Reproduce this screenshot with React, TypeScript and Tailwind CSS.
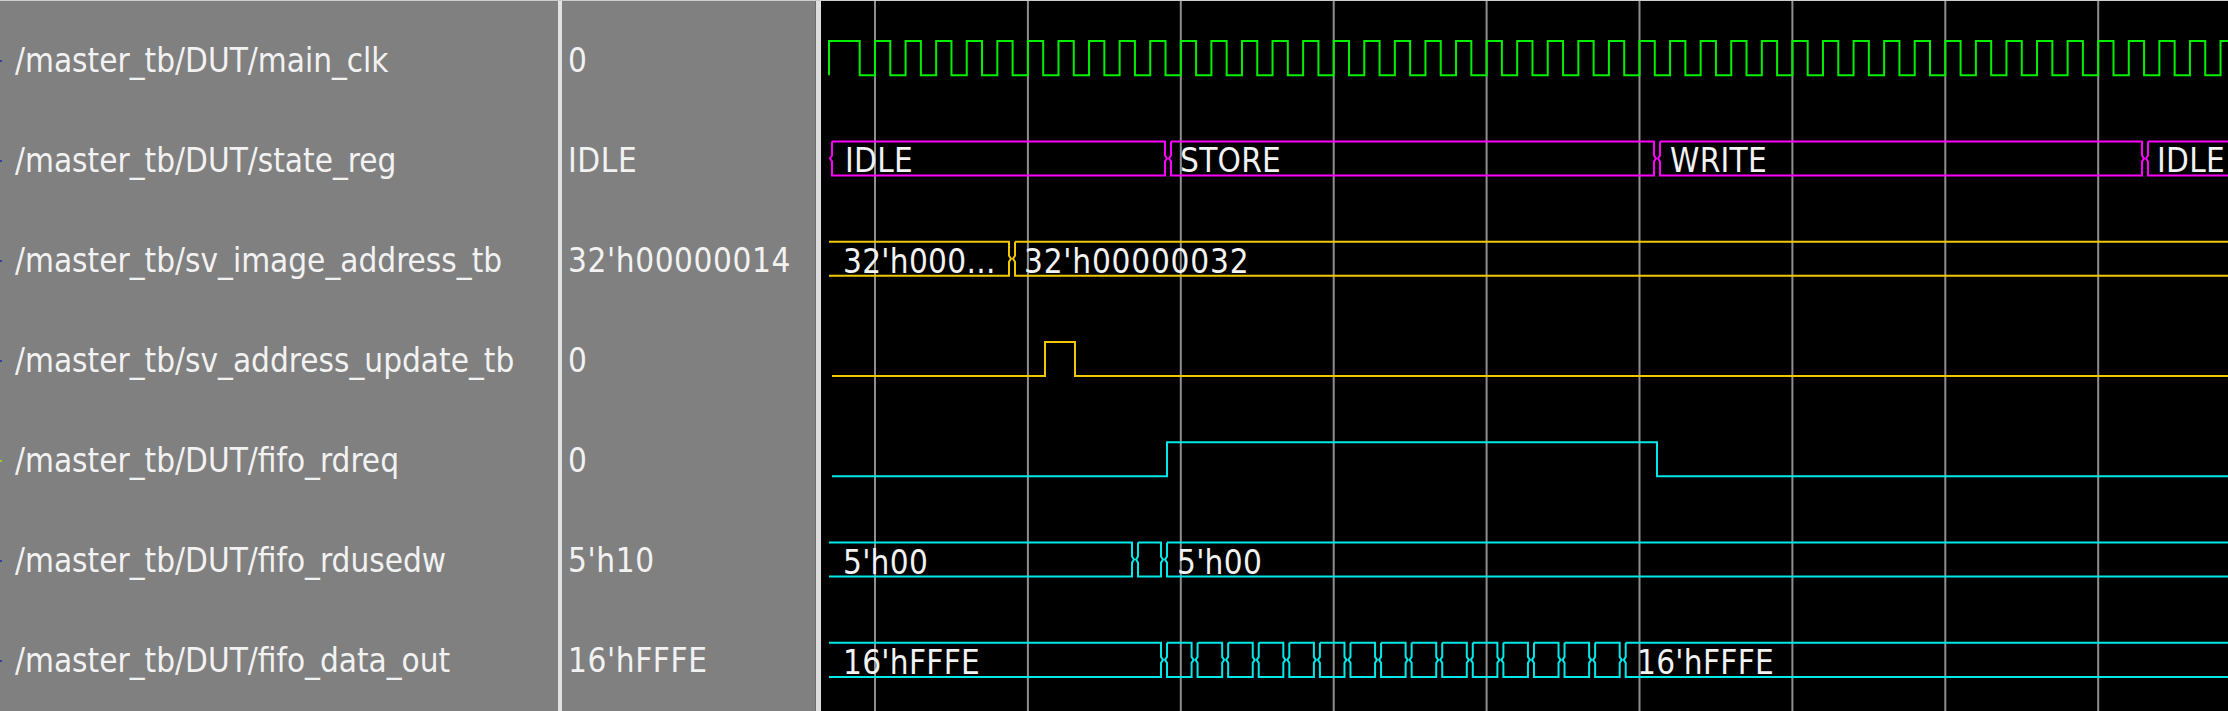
const rows = [
  { name: "/master_tb/DUT/main_clk", value: "0", dot: "bg-[#3a3aa8]" },
  { name: "/master_tb/DUT/state_reg", value: "IDLE", dot: "bg-[#3a3aa8]" },
  { name: "/master_tb/sv_image_address_tb", value: "32'h00000014", dot: "bg-[#3a3aa8]" },
  { name: "/master_tb/sv_address_update_tb", value: "0", dot: "bg-[#3a3aa8]" },
  { name: "/master_tb/DUT/fifo_rdreq", value: "0", dot: "bg-[#9ccc2a]" },
  { name: "/master_tb/DUT/fifo_rdusedw", value: "5'h10", dot: "bg-[#3a3aa8]" },
  { name: "/master_tb/DUT/fifo_data_out", value: "16'hFFFE", dot: "bg-[#3a3aa8]" },
];

const END = 2240;
const PERIOD = 152.9 / 5;
const top = (i: number) => 43 + 100 * i;
const bot = (i: number) => 77 + 100 * i;
const mid = (i: number) => 60 + 100 * i;

// one bus segment between two transition centres, drawn as "}{" edges
function segment(i: number, a: number | null, b: number | null) {
  const h = 3;
  const T = top(i);
  const B = bot(i);
  const M = mid(i);
  const x0 = a === null ? 829 : a + h;
  const x1 = b === null ? END : b - h;
  let d = `M${x0},${T} H${x1}`;
  if (b !== null) d += ` V${M - h} L${b - 1},${M} L${x1},${M + h} V${B}`;
  else d += ` M${x1},${B}`;
  d += ` H${x0}`;
  if (a !== null) d += ` V${M + h} L${a + 1},${M} L${x0},${M - h} V${T}`;
  return d;
}

function bus(i: number, edges: number[], openStart: boolean) {
  const pts: (number | null)[] = openStart ? [null, ...edges, null] : [...edges, null];
  const out: string[] = [];
  for (let k = 0; k < pts.length - 1; k++) out.push(segment(i, pts[k], pts[k + 1]));
  return out.join(" ");
}

function clockPath() {
  const T = top(0);
  const B = bot(0);
  let d = `M829,${B} V${T} H${875 - PERIOD / 2} V${B} H875`;
  for (let r = 875; r < END; r += PERIOD) {
    d += ` V${T} H${(r + PERIOD / 2).toFixed(2)} V${B} H${(r + PERIOD).toFixed(2)}`;
  }
  return d;
}

const grid = [0, 1, 2, 3, 4, 5, 6, 7, 8].map((k) => 875 + 152.9 * k);
const dataEdges = Array.from({ length: 16 }, (_, k) => 1164 + PERIOD * k);

function Waves() {
  const label = "fill-[#f2f2f2] tracking-[0.3px]";
  return (
    <svg viewBox="821 3 1407 708" className="h-full w-full" preserveAspectRatio="none">
      {grid.map((x) => (
        <line key={x} x1={x} x2={x} y1={3} y2={711} stroke="#8e8e8e" strokeWidth={2} />
      ))}
      <path d={clockPath()} fill="none" stroke="#00f000" strokeWidth={2} />

      <path d={bus(1, [829, 1168, 1657, 2145], false)} fill="none" stroke="#ff00ff" strokeWidth={2} />
      <text x={845} y={174} className={label}>IDLE</text>
      <text x={1180} y={174} className={label}>STORE</text>
      <text x={1670} y={174} className={label}>WRITE</text>
      <text x={2157} y={174} className={label}>IDLE</text>

      <path d={bus(2, [1012], true)} fill="none" stroke="#f0c800" strokeWidth={2} />
      <text x={843} y={274} className={label}>32'h000...</text>
      <text x={1024} y={274} className="fill-[#f2f2f2] tracking-[0.8px]">32'h00000032</text>

      <path
        d={`M832,${bot(3)} H1045 V${top(3)} H1075 V${bot(3)} H${END}`}
        fill="none"
        stroke="#f0c800"
        strokeWidth={2}
      />

      <path
        d={`M832,${bot(4)} H1167 V${top(4)} H1657 V${bot(4)} H${END}`}
        fill="none"
        stroke="#00e8e8"
        strokeWidth={2}
      />

      <path d={bus(5, [1135, 1164], true)} fill="none" stroke="#00e8e8" strokeWidth={2} />
      <text x={843} y={574} className={label}>5'h00</text>
      <text x={1177} y={574} className={label}>5'h00</text>

      <path d={bus(6, dataEdges, true)} fill="none" stroke="#00e8e8" strokeWidth={2} />
      <text x={843} y={674} className={label}>16'hFFFE</text>
      <text x={1637} y={674} className={label}>16'hFFFE</text>
    </svg>
  );
}

export default function App() {
  return (
    <div className="flex h-[711px] w-[2228px] flex-col overflow-hidden bg-black font-['DejaVu_Sans_Condensed','DejaVu_Sans',sans-serif] text-[33px] text-[#f2f2f2]">
      <div className="h-[3px] bg-[#cdcdcd]" />
      <div className="flex flex-1">
        <div className="w-[558px] bg-[#808080] pt-[10px]">
          {rows.map((r) => (
            <div key={r.name} className="flex h-[100px] items-center whitespace-nowrap">
              <span className={`h-[2px] w-[2px] ${r.dot}`} />
              <span className="pl-[13px]">{r.name}</span>
            </div>
          ))}
        </div>
        <div className="w-[4px] bg-[#e2e2e2]" />
        <div className="w-[253px] bg-[#808080] pt-[10px] pl-[6px] tracking-[0.6px]">
          {rows.map((r) => (
            <div key={r.name} className="flex h-[100px] items-center whitespace-nowrap">
              {r.value}
            </div>
          ))}
        </div>
        <div className="w-[6px] border-l border-[#6c6c6c] bg-[#dedede]" />
        <div className="flex-1">
          <Waves />
        </div>
      </div>
    </div>
  );
}
